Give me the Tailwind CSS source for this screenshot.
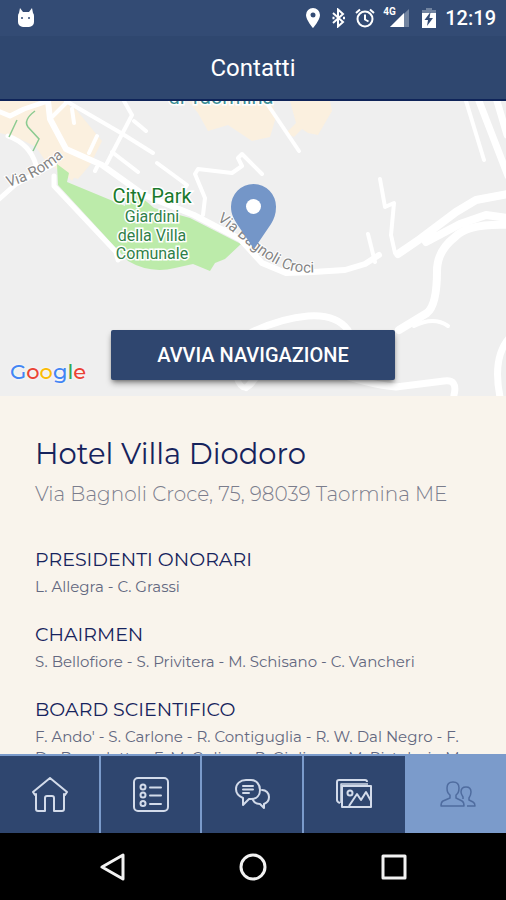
<!DOCTYPE html>
<html lang="it">
<head>
    <meta charset="UTF-8" />
    <meta name="viewport" content="width=device-width, initial-scale=1.0"/>
    <title>Contatti</title>
    <script src="https://cdn.jsdelivr.net/npm/@tailwindcss/browser@4"></script>
</head>
<body class="h-screen flex flex-col overflow-hidden bg-black font-[Roboto,sans-serif]">

<!-- Status bar + title -->
<header class="shrink-0 bg-[#2f476f] border-b-2 border-[#0f2459] text-white">
    <div class="h-9 bg-[#334b74] flex items-center justify-between pl-4 pr-2.5">
        <svg class="w-5 h-6" viewBox="0 0 20 24" fill="#fff">
            <path d="M4 2l3 4h6l3-4 1 5q1 1 1 3v6a5 5 0 0 1-5 5H7a5 5 0 0 1-5-5v-6q0-2 1-3z"/>
            <circle cx="6" cy="12" r="1" fill="#334b74"/>
            <circle cx="13" cy="12" r="1" fill="#334b74"/>
        </svg>
        <div class="flex items-center">
            <svg class="w-4 h-5" viewBox="0 0 16 20" fill="#fff">
                <path fill-rule="evenodd" d="M8 0a7 7 0 0 0-7 7c0 5 7 13 7 13s7-8 7-13a7 7 0 0 0-7-7zm0 4.500a2.500 2.500 0 1 1 0 5 2.500 2.500 0 0 1 0-5z"/>
            </svg>
            <svg class="w-4 h-5 ml-2.5" viewBox="0 0 16 20" fill="none" stroke="#fff" stroke-width="2">
                <path d="M2 5l10 9-5 4.500V1.500L12 6 2 15"/>
                <path d="M1.500 10h2M12 10h2" stroke-width="2.500"/>
            </svg>
            <svg class="w-5 h-5 ml-2" viewBox="0 0 20 20" fill="none" stroke="#fff" stroke-width="2">
                <circle cx="10" cy="11" r="7.500"/>
                <path d="M1 5l4-3.500M19 5l-4-3.500M10 6.500v5l3.500 2"/>
            </svg>
            <div class="relative ml-2.5 w-6 h-5">
                <svg class="w-6 h-5" viewBox="0 0 24 20">
                    <path d="M24 1v18H5z" fill="#7284a0"/>
                    <path d="M19 5v14H5z" fill="#fff"/>
                </svg>
                <span class="absolute -left-0.5 -top-0.5 text-[10px] leading-3 font-bold">4G</span>
            </div>
            <svg class="w-4 h-5 ml-3" viewBox="0 0 16 20">
                <path d="M5 0h6v2h4v5H1V2h4z" fill="#7284a0"/>
                <path d="M1 5h14v15H1z" fill="#fff"/>
                <path d="M9.500 4l-6 8H7l-1 6 6-8H8.500z" fill="#334b74"/>
            </svg>
            <span class="ml-2 text-[20px] leading-6 font-medium">12:19</span>
        </div>
    </div>
    <h1 class="h-[63px] pt-4 text-center text-[24px] leading-8">Contatti</h1>
</header>

<main class="flex-1 min-h-0 overflow-hidden bg-[#f9f4ec]">
    <!-- Map -->
    <section class="relative h-[295px] bg-[#efefef] overflow-hidden" aria-label="Mappa">
        <svg class="w-full h-full" viewBox="0 0 506 295" preserveAspectRatio="xMidYMid slice">
            <!-- built-up areas -->
            <g fill="#fbf0df">
                <path d="M0 0h66l14 20 20 22-12 14-16 24-10-10-14-6-12-18-20-10-16-4z"/>
                <path d="M52 20l22-14 28 34-12 24-12 14-12-4-2-18z"/>
                <path d="M188 0h84l4 16-6 20-18 4-24-16-20 6-10-18z"/>
                <path d="M290 0h40l2 10-14 24-10-2-6-4-8 8-8-4 10-10z"/>
            </g>
            <!-- park -->
            <path fill="#bcebaa" d="M57 63l12 9-2 9 58 24 1-19 8 4 20 17 36 10 51 26-16 15-10 4-5 8-17-7-18 4q-25 6-47-7L58 84z"/>
            <!-- roads -->
            <g fill="none" stroke="#fff" stroke-width="5" stroke-linejoin="round" stroke-linecap="round">
                <path d="M-2 10l12 5 14-7 24-8M8 35q22 8 28 29"/>
                <path d="M48 0l2 18 16 30 36 16 42 30 50 20 46 24 22 24 24 10 27-1 32-2 20-6 14-9" stroke-width="6"/>
                <path d="M50 18L66 2M66 0l55 32 32 20M72 8l2 14M124 0l8 14-25 48M97 35l-8 17M134 20l12 10M112 51l26 20M157 62l30 22-4 6M97 66l-2 4" stroke-width="4"/>
                <path d="M203 114l2-17-10-24 3-5 34 4 10-7-4-8 4-4 20 20" stroke-width="4"/>
                <path d="M-2 99l18-16 38-20M54 75v10l62 66 2 8" stroke-width="5"/>
                <path d="M268 4l31 46" stroke-width="4"/>
                <path d="M466 0l18 59" stroke-width="4"/>
                <path d="M479 0l29 75M497 0l10 34" stroke-width="7"/>
                <path d="M380 78l5 28 9-4-3 32 4 18M368 133l7 28" stroke-width="4"/>
                <path d="M398 153l22-15 36-27 20-12 32-6M426 141l34-18 26-9 22 3" stroke-width="8"/>
                <path d="M510 124q-42-2-55 12-18 14-18 34 0 34-10 42l-28 17" stroke-width="8"/>
                <path d="M414 225q20-10 34 0" stroke-width="4"/>
                <path d="M252 231q30-14 56-16 28-2 40 14" stroke-width="7"/>
                <path d="M330 270q40 14 66 16l48-6q14-2 10 14M510 236q-18 20-10 60" stroke-width="7"/>
                <path d="M236 275q8 24 22-2l-12 14" stroke-width="6"/>
            </g>
            <path d="M17 19L9 36M35 10q-12 9-7 16l11 12-6 12" fill="none" stroke="#8ccb91" stroke-width="1.500"/>

            <!-- labels -->
            <path id="via-roma" d="M8 86Q40 78 70 50" fill="none"/>
            <path id="via-bagnoli" d="M217 119Q232 130 248 144T286 168Q302 174 334 170" fill="none"/>
            <g fill="#858585" stroke="#fff" stroke-width="2" paint-order="stroke" font-size="15">
                <text><textPath href="#via-roma">Via Roma</textPath></text>
                <text><textPath href="#via-bagnoli">Via Bagnoli Croci</textPath></text>
            </g>
            <g fill="#2f8048" stroke="#fff" stroke-width="3" paint-order="stroke" text-anchor="middle" font-size="16">
                <text x="221" y="3" font-size="20" fill="#3c8f96">di Taormina</text>
                <text x="152" y="102" font-size="20" fill="#1a7a2c">City Park</text>
                <text x="152" y="121">Giardini</text>
                <text x="152" y="140">della Villa</text>
                <text x="152" y="158">Comunale</text>
            </g>

            <!-- pin -->
            <path fill="#7496c8" d="M253.500 83a22.500 22.500 0 0 0-22.500 23c0 7 3 12 6 17l17 25 17-25c3-5 5-10 5-17a22.500 22.500 0 0 0-22.500-23z"/>
            <circle cx="253.500" cy="105.500" r="7.500" fill="#fff"/>
        </svg>
        <div class="absolute left-2.5 bottom-2 font-[Montserrat,sans-serif] text-[21px] leading-8 font-medium [text-shadow:0_0_3px_white]" aria-label="Google">
            <span class="text-[#4285f4]">G</span><span class="text-[#ea4335]">o</span><span class="text-[#fbbc05]">o</span><span class="text-[#4285f4]">g</span><span class="text-[#34a853]">l</span><span class="text-[#ea4335]">e</span>
        </div>
        <button class="absolute left-[22%] right-[22%] bottom-4 h-[50px] rounded-xs bg-[#2f466f] text-white text-[20px] font-medium shadow-md shadow-black/40">AVVIA NAVIGAZIONE</button>
    </section>

    <!-- Contact details -->
    <section class="px-[35px] pt-[38px] font-[Montserrat,Inter,sans-serif]">
        <h2 class="text-[29px] leading-10 text-[#16235c]">Hotel Villa Diodoro</h2>
        <p class="mt-1 text-[20px] leading-8 font-light text-[#7b7d8c] whitespace-nowrap">Via Bagnoli Croce, 75, 98039 Taormina ME</p>

        <h3 class="mt-9 text-[19px] leading-7 text-[#16235c]">PRESIDENTI ONORARI</h3>
        <p class="mt-0.5 text-[15px] leading-[21px] text-[#636880]">L. Allegra - C. Grassi</p>

        <h3 class="mt-6 text-[19px] leading-7 text-[#16235c]">CHAIRMEN</h3>
        <p class="mt-0.5 text-[15px] leading-[21px] text-[#636880]">S. Bellofiore - S. Privitera - M. Schisano - C. Vancheri</p>

        <h3 class="mt-6 text-[19px] leading-7 text-[#16235c]">BOARD SCIENTIFICO</h3>
        <p class="mt-0.5 text-[15px] leading-[21px] text-[#636880] whitespace-nowrap">F. Ando' - S. Carlone - R. Contiguglia - R. W. Dal Negro - F.<br>De Benedetto - F. M. Gulino - R. Giuliano - M. Pistolesi - M.</p>
    </section>
</main>

<!-- Tabs -->
<nav class="shrink-0 h-[79px] grid grid-cols-5 bg-[#2f466f] border-t-2 border-[#7b9bcb]">
    <a href="#home" aria-label="Home" class="flex items-center justify-center border-r-2 border-[#7b9bcb]">
        <svg class="w-9 h-9" viewBox="0 0 36 36" fill="none" stroke="#d3dbea" stroke-width="2" stroke-linejoin="round">
            <path d="M18 1L1 15l2 3 1-1v15q0 2 2 2h7V21q0-2 2-2h5q2 0 2 2v13h8q2 0 2-2V17l1 1 2-3z"/>
        </svg>
    </a>
    <a href="#programma" aria-label="Programma" class="flex items-center justify-center border-r-2 border-[#7b9bcb]">
        <svg class="w-9 h-9" viewBox="0 0 36 36" fill="none" stroke="#d3dbea" stroke-width="2" stroke-linecap="round">
            <rect x="1" y="1" width="34" height="33" rx="4"/>
            <circle cx="10" cy="10" r="2.500"/>
            <circle cx="10" cy="18" r="2.500"/>
            <circle cx="10" cy="26.500" r="2.500"/>
            <path d="M17 10.500h11M17 18.500h11M17 27h11"/>
        </svg>
    </a>
    <a href="#messaggi" aria-label="Messaggi" class="flex items-center justify-center border-r-2 border-[#7b9bcb]">
        <svg class="w-9 h-9" viewBox="0 0 36 36" fill="none" stroke="#d3dbea" stroke-width="2" stroke-linecap="round" stroke-linejoin="round">
            <path d="M12 3C6 3 2 7 2 12q0 6 7 9v7l6-6h2c6 0 9-4 9-9 0-6-4-10-9-10z"/>
            <path d="M9 9h10M9 12.500h10M9 16h6"/>
            <path d="M28 13c4 0 7 3 7 7q0 5-5 7v4l-4-4q-5 0-7-4"/>
        </svg>
    </a>
    <a href="#galleria" aria-label="Galleria" class="flex items-center justify-center">
        <svg class="w-9 h-9" viewBox="0 0 36 36" fill="none" stroke="#d3dbea" stroke-width="2" stroke-linejoin="round">
            <path d="M31 5q0-2-2-2H3Q1 3 1 5v18q0 2 3 3"/>
            <path d="M32 7H5v19" stroke-width="1.500"/>
            <rect x="6" y="9" width="29" height="21"/>
            <circle cx="14" cy="16" r="2.500"/>
            <path d="M13 29l8-12 4 6 5-8 5 9"/>
        </svg>
    </a>
    <a href="#contatti" aria-label="Contatti" aria-current="page" class="flex items-center justify-center pl-1.5 bg-[#7b9bcb]">
        <svg class="w-9 h-9" viewBox="0 0 36 36" fill="none" stroke="#4f6c9f" stroke-width="1.500" stroke-linejoin="round">
            <path d="M13 5q-6 0-6 6 0 5 3 7v3l-7 3q-2 1-2 5h23q0-4-2-5l-6-3v-3q3-2 3-7 0-6-6-6z"/>
            <path d="M23 22v-2q-2-3-2-5 0-5 5-5t5 5q0 3-2 6v2l4 2q2 1 2 4h-8"/>
        </svg>
    </a>
</nav>

<!-- System buttons -->
<div class="shrink-0 h-[67px] bg-black flex items-center justify-center gap-28">
    <button aria-label="Indietro">
        <svg class="w-7 h-7" viewBox="0 0 28 28" fill="none" stroke="#f2f2f2" stroke-width="3" stroke-linejoin="round"><path d="M24 2v24L3 14z"/></svg>
    </button>
    <button aria-label="Home">
        <svg class="w-7 h-7" viewBox="0 0 28 28" fill="none" stroke="#f2f2f2" stroke-width="3"><circle cx="14" cy="14" r="12"/></svg>
    </button>
    <button aria-label="Recenti">
        <svg class="w-7 h-7" viewBox="0 0 28 28" fill="none" stroke="#f2f2f2" stroke-width="3" stroke-linejoin="round"><rect x="4" y="3" width="22" height="22"/></svg>
    </button>
</div>
</body>
</html>
